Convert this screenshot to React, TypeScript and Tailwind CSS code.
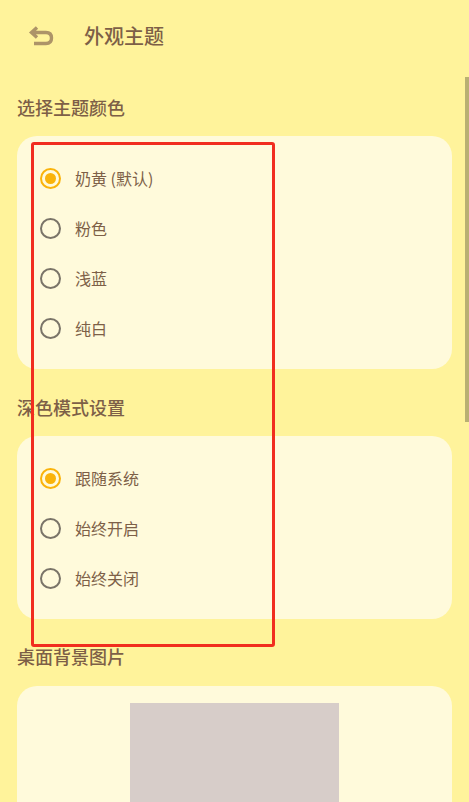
const font = { fontFamily: '"Noto Sans CJK SC", "Noto Sans", sans-serif' };

const themeOptions = ["奶黄 (默认)", "粉色", "浅蓝", "纯白"];
const darkOptions = ["跟随系统", "始终开启", "始终关闭"];

const RadioRow = ({ label, checked }: { label: string; checked?: boolean }) => (
  <div className="flex h-[50px] items-center pl-[23px]">
    {checked ? (
      <span className="flex h-[21px] w-[21px] items-center justify-center rounded-full border-2 border-[#fab30a]">
        <span className="h-[11px] w-[11px] rounded-full bg-[#fab30a]" />
      </span>
    ) : (
      <span className="h-[21px] w-[21px] rounded-full border-2 border-[#7a7468]" />
    )}
    <span className="ml-[14px] text-[16px] leading-none text-[#7d5f47]">{label}</span>
  </div>
);

const SectionTitle = ({ children }: { children: string }) => (
  <h2 className="flex h-[24px] items-center pl-[17px] text-[18px] font-medium leading-none text-[#7d5f47]">
    {children}
  </h2>
);

const Card = ({ options }: { options: string[] }) => (
  <section className="mx-[17px] mt-[17px] rounded-[20px] bg-[#fffadb] pb-[16px] pt-[17px]">
    {options.map((item, idx) => (
      <RadioRow key={item} label={item} checked={idx === 0} />
    ))}
  </section>
);

export default function App() {
  return (
    <div className="relative h-[802px] w-[469px] overflow-hidden bg-[#fff39b]" style={font}>
      <header className="flex h-[72px] items-center pl-[28px]">
        <svg width="28" height="24" viewBox="0 0 28 24" fill="none" className="mb-[1px]">
          <path
            d="M9 3.5 L3.5 8.5 L9 13.5 M4.5 8.5 H18 C21.5 8.5 23.5 10.7 23.5 14 C23.5 17.3 21.5 19.5 18 19.5 H6"
            stroke="#ad9468"
            strokeWidth="3.4"
          />
        </svg>
        <h1 className="ml-[28px] text-[20px] font-medium leading-none text-[#7d5f47]">外观主题</h1>
      </header>

      <main className="pt-[23px]">
        <SectionTitle>选择主题颜色</SectionTitle>
        <Card options={themeOptions} />
        <div className="mt-[26px]">
          <SectionTitle>深色模式设置</SectionTitle>
          <Card options={darkOptions} />
        </div>
        <div className="mt-[25px]">
          <SectionTitle>桌面背景图片</SectionTitle>
          <section className="mx-[17px] mt-[18px] flex h-[200px] justify-center rounded-[20px] bg-[#fffadb] pt-[17px]">
            <div className="h-[183px] w-[209px] bg-[#d7cdc9]" />
          </section>
        </div>
      </main>

      {/* scrollbar */}
      <div className="absolute right-0 top-[77px] h-[345px] w-[4px] bg-[#b9b072]" />
      {/* red annotation box */}
      <div className="absolute left-[31px] top-[142px] h-[505px] w-[244px] rounded-[3px] border-[3px] border-[#f12d1e]" />
    </div>
  );
}
